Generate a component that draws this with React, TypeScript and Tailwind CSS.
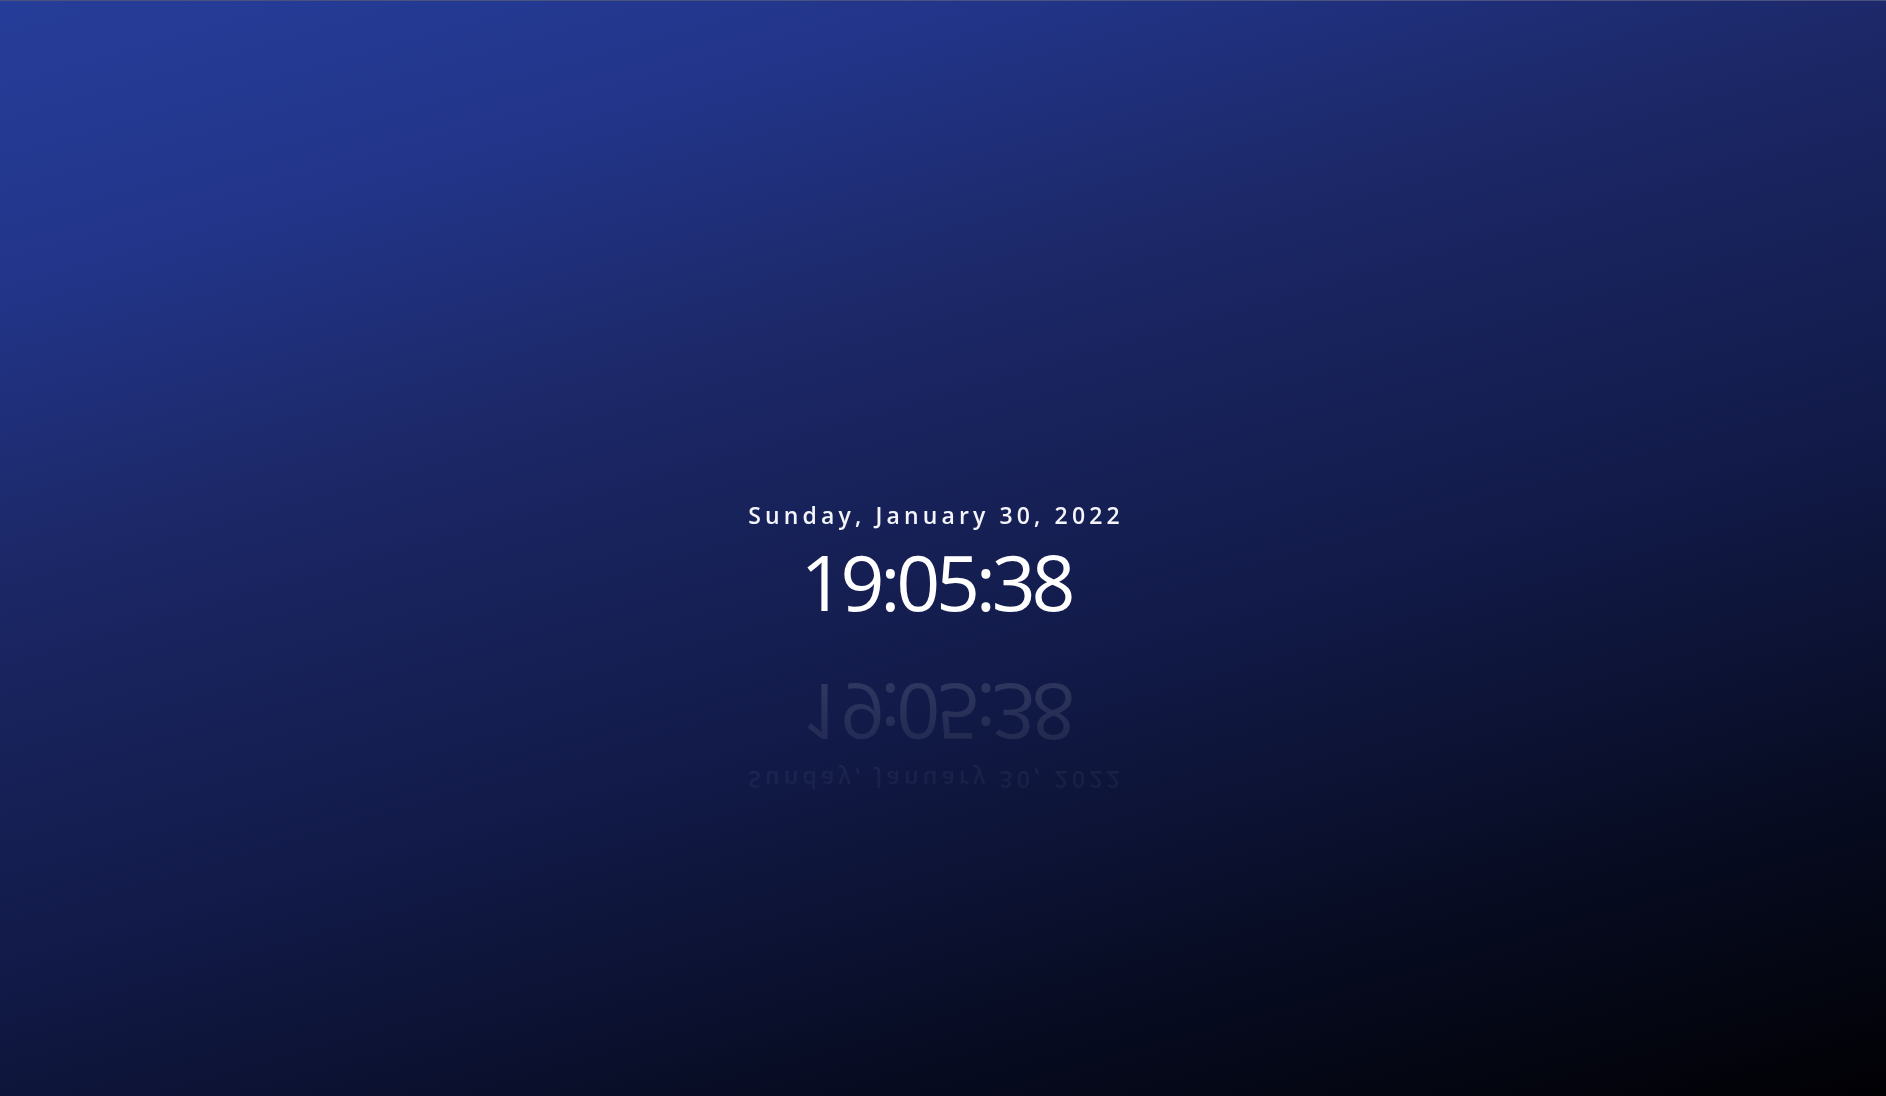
export default function App() {
  const date = "Sunday, January 30, 2022";
  const time = "19:05:38";

  return (
    <div className="flex h-screen w-full flex-col items-center justify-center border-t border-[#4a5380] bg-[linear-gradient(164deg,#263d99_0%,#22358a_17%,#1c2868_34%,#111a47_60%,#070b20_82%,#010104_100%)] pt-[27px] pr-[14px] font-['Open_Sans',sans-serif] text-white">
      <div className="flex flex-col items-center [-webkit-box-reflect:below_55px_linear-gradient(rgba(255,255,255,0.04),rgba(255,255,255,0.13))]">
        <div className="text-[23px] leading-none font-semibold tracking-[0.18em] text-[#f4f5fa]">
          {date}
        </div>
        <div className="mt-[16px] text-[77px] leading-none font-normal tracking-[-0.055em]">
          {time}
        </div>
      </div>
    </div>
  );
}
